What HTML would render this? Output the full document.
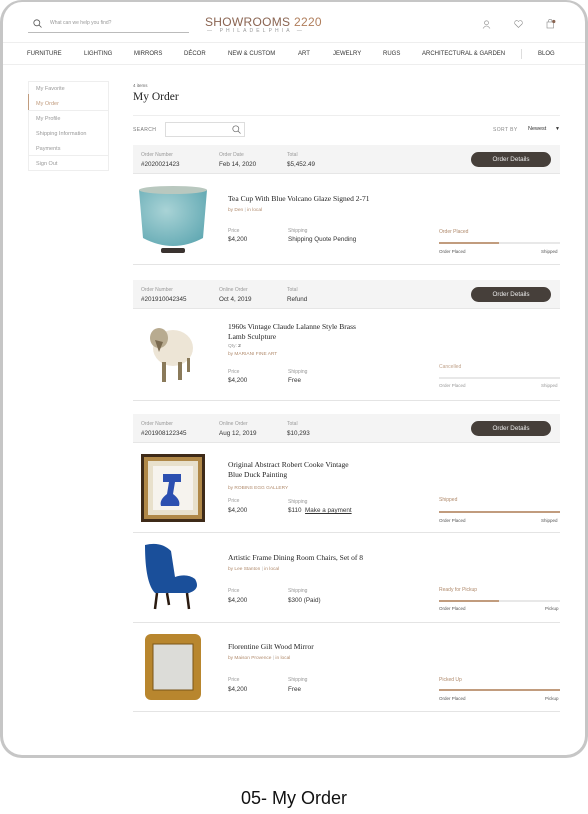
<!DOCTYPE html>
<html><head><meta charset="utf-8"><style>
*{margin:0;padding:0;box-sizing:border-box}
body{width:588px;height:814px;background:#fff;position:relative;overflow:hidden;font-family:"Liberation Sans",sans-serif;color:#333}
.frame{position:absolute;left:0;top:0;width:588px;height:758px;border-radius:22px;background:#fff;overflow:hidden}
.border{position:absolute;left:0;top:0;width:588px;height:758px;border:3px solid #c6c6c6;border-top-width:2px;border-radius:22px}
.a{position:absolute;white-space:nowrap}
.nav{font-size:6px;color:#333;top:51px}
.sb{left:36px;font-size:5.5px;color:#999}
.lbl{font-size:5px;color:#999}
.val{font-size:6.3px;color:#333}
.serif{font-family:"Liberation Serif",serif;color:#222}
.tan{color:#b08a6c}
.band{position:absolute;left:133px;width:427px;height:29px;background:#f4f4f4;border-bottom:1px solid #e6e6e6}
.btn{position:absolute;left:471px;width:80px;height:15px;border-radius:8px;background:#463f3a;color:#eee;font-size:6.3px;text-align:center;line-height:15px}
.sep{position:absolute;left:133px;width:427px;height:1px;background:#e4e4e4}
.bar{position:absolute;left:439px;width:121px;height:2px;background:#e8e8e8}
.bar i{display:block;height:2px;background:#c19c7e}
.sm{font-size:4.5px;color:#555}
</style></head><body>
<div class="frame">
<svg class="a" style="left:33px;top:19px" width="9" height="9" viewBox="0 0 9 9"><circle cx="3.8" cy="3.8" r="3" fill="none" stroke="#555" stroke-width=".8"/><line x1="6" y1="6" x2="8.5" y2="8.5" stroke="#555" stroke-width=".8"/></svg>
<div class="a" style="left:50px;top:20px;font-size:5px;color:#999">What can we help you find?</div>
<div class="a" style="left:28px;top:32px;width:161px;height:1px;background:#bbb"></div>
<div class="a" style="left:205px;top:15px;font-size:12px;color:#8a6451;letter-spacing:.3px">SHOWROOMS <span style="color:#b07e5c">2220</span></div>
<div class="a" style="left:207px;top:28px;font-size:5px;color:#999;letter-spacing:3.1px">— PHILADELPHIA —</div>
<svg class="a" style="left:482px;top:20px" width="9" height="9" viewBox="0 0 9 9"><circle cx="4.5" cy="2.8" r="2" fill="none" stroke="#888" stroke-width=".6"/><path d="M1 8.5 Q4.5 3.5 8 8.5" fill="none" stroke="#888" stroke-width=".6"/></svg>
<svg class="a" style="left:514px;top:20px" width="9" height="8" viewBox="0 0 9 8"><path d="M4.5 7.5 L1 4 A2 2 0 0 1 4.5 1.5 A2 2 0 0 1 8 4 Z" fill="none" stroke="#888" stroke-width=".6"/></svg>
<svg class="a" style="left:546px;top:19px" width="10" height="10" viewBox="0 0 10 10"><rect x="1" y="3" width="6.5" height="6" fill="none" stroke="#888" stroke-width=".6"/><path d="M2.5 3 V2 a1.7 1.7 0 0 1 3.4 0 V3" fill="none" stroke="#888" stroke-width=".6"/><circle cx="7.8" cy="2.5" r="1.6" fill="#8a6451"/></svg>
<div class="a" style="left:0;top:42px;width:588px;height:1px;background:#eee"></div>
<div class="a nav" style="left:27px">FURNITURE</div>
<div class="a nav" style="left:84px">LIGHTING</div>
<div class="a nav" style="left:134px">MIRRORS</div>
<div class="a nav" style="left:184px">DÉCOR</div>
<div class="a nav" style="left:228px">NEW &amp; CUSTOM</div>
<div class="a nav" style="left:298px">ART</div>
<div class="a nav" style="left:333px">JEWELRY</div>
<div class="a nav" style="left:383px">RUGS</div>
<div class="a nav" style="left:422px">ARCHITECTURAL &amp; GARDEN</div>
<div class="a" style="left:521px;top:49px;width:1px;height:10px;background:#ddd"></div>
<div class="a nav" style="left:538px">BLOG</div>
<div class="a" style="left:0;top:64px;width:588px;height:1px;background:#eee"></div>
<div class="a" style="left:28px;top:81px;width:81px;height:90px;border:1px solid #eee"></div>
<div class="a" style="left:28px;top:94px;width:1px;height:16px;background:#c19c7e"></div>
<div class="a" style="left:28px;top:110px;width:81px;height:1px;background:#eee"></div>
<div class="a" style="left:28px;top:155px;width:81px;height:1px;background:#eee"></div>
<div class="a sb" style="top:86px">My Favorite</div>
<div class="a sb" style="top:101px;color:#c19c7e">My Order</div>
<div class="a sb" style="top:116px">My Profile</div>
<div class="a sb" style="top:131px">Shipping Information</div>
<div class="a sb" style="top:146px">Payments</div>
<div class="a sb" style="top:161px">Sign Out</div>
<div class="a" style="left:133px;top:83px;font-size:4.5px;color:#666">4 items</div>
<div class="a serif" style="left:133px;top:91px;font-size:11.5px">My Order</div>
<div class="a" style="left:133px;top:115px;width:427px;height:1px;background:#eee"></div>
<div class="a" style="left:133px;top:127px;font-size:5px;color:#777;letter-spacing:.4px">SEARCH</div>
<div class="a" style="left:165px;top:122px;width:80px;height:15px;border:1px solid #ddd"></div>
<svg class="a" style="left:232px;top:125px" width="9" height="9" viewBox="0 0 9 9"><circle cx="3.8" cy="3.8" r="3" fill="none" stroke="#666" stroke-width=".7"/><line x1="6" y1="6" x2="8.5" y2="8.5" stroke="#666" stroke-width=".7"/></svg>
<div class="a" style="left:493px;top:127px;font-size:5px;color:#888;letter-spacing:.4px">SORT BY</div>
<div class="a" style="left:528px;top:126px;font-size:5.5px;color:#333">Newest</div>
<div class="a" style="left:555px;top:126px;font-size:5px">▼</div>

<div class="band" style="top:145px"></div>
<div class="a lbl" style="left:141px;top:152px">Order Number</div><div class="a val" style="left:141px;top:161px">#2020021423</div>
<div class="a lbl" style="left:219px;top:152px">Order Date</div><div class="a val" style="left:219px;top:161px">Feb 14, 2020</div>
<div class="a lbl" style="left:287px;top:152px">Total</div><div class="a val" style="left:287px;top:161px">$5,452.49</div>
<div class="btn" style="top:152px">Order Details</div>
<svg class="a" style="left:137px;top:184px" width="72" height="72" viewBox="0 0 72 72"><defs><radialGradient id="g1" cx=".4" cy=".4" r=".7"><stop offset="0" stop-color="#a9d3d6"/><stop offset="1" stop-color="#62a9b3"/></radialGradient></defs><path d="M2 6 Q36 0 70 6 L66 54 Q36 70 6 54 Z" fill="url(#g1)"/><ellipse cx="36" cy="6" rx="34" ry="4" fill="#b9c8bf"/><rect x="24" y="64" width="24" height="5" rx="2" fill="#3a3330"/></svg>
<div class="a serif" style="left:228px;top:194px;font-size:7.5px">Tea Cup With Blue Volcano Glaze Signed 2-71</div>
<div class="a tan" style="left:228px;top:208px;font-size:4.8px">by Den <span style="color:#bbb">|</span> in local</div>
<div class="a lbl" style="left:228px;top:228px">Price</div><div class="a val" style="left:228px;top:236px">$4,200</div>
<div class="a lbl" style="left:288px;top:228px">Shipping</div><div class="a val" style="left:288px;top:236px">Shipping Quote Pending</div>
<div class="a tan" style="left:439px;top:229px;font-size:5px">Order Placed</div>
<div class="bar" style="top:242px"><i style="width:60px"></i></div>
<div class="a sm" style="left:439px;top:249px">Order Placed</div><div class="a sm" style="left:541px;top:249px">Shipped</div>
<div class="sep" style="top:264px"></div>

<div class="band" style="top:280px"></div>
<div class="a lbl" style="left:141px;top:287px">Order Number</div><div class="a val" style="left:141px;top:296px">#201910042345</div>
<div class="a lbl" style="left:219px;top:287px">Online Order</div><div class="a val" style="left:219px;top:296px">Oct 4, 2019</div>
<div class="a lbl" style="left:287px;top:287px">Total</div><div class="a val" style="left:287px;top:296px">Refund</div>
<div class="btn" style="top:287px">Order Details</div>
<svg class="a" style="left:145px;top:318px" width="50" height="72" viewBox="0 0 50 72"><ellipse cx="28" cy="30" rx="20" ry="18" fill="#ede5d6"/><ellipse cx="14" cy="20" rx="9" ry="10" fill="#b8ab90"/><path d="M10 22 L14 34 L18 24" fill="#7a6a50"/><rect x="17" y="44" width="4" height="20" fill="#8a7a5a"/><rect x="33" y="44" width="4" height="18" fill="#8a7a5a"/><rect x="42" y="40" width="3" height="14" fill="#8a7a5a"/></svg>
<div class="a serif" style="left:228px;top:322px;font-size:7.5px;line-height:10px">1960s Vintage Claude Lalanne Style Brass<br>Lamb Sculpture</div>
<div class="a" style="left:228px;top:344px;font-size:4.8px;color:#999">Qty: <span style="color:#333">2</span></div>
<div class="a tan" style="left:228px;top:352px;font-size:4.8px">by MARIANI FINE ART</div>
<div class="a lbl" style="left:228px;top:369px">Price</div><div class="a val" style="left:228px;top:377px">$4,200</div>
<div class="a lbl" style="left:288px;top:369px">Shipping</div><div class="a val" style="left:288px;top:377px">Free</div>
<div class="a tan" style="left:439px;top:364px;font-size:5px;opacity:.8">Cancelled</div>
<div class="bar" style="top:377px"></div>
<div class="a sm" style="left:439px;top:383px;color:#999">Order Placed</div><div class="a sm" style="left:541px;top:383px;color:#999">Shipped</div>
<div class="sep" style="top:400px"></div>

<div class="band" style="top:414px"></div>
<div class="a lbl" style="left:141px;top:421px">Order Number</div><div class="a val" style="left:141px;top:430px">#201908122345</div>
<div class="a lbl" style="left:219px;top:421px">Online Order</div><div class="a val" style="left:219px;top:430px">Aug 12, 2019</div>
<div class="a lbl" style="left:287px;top:421px">Total</div><div class="a val" style="left:287px;top:430px">$10,293</div>
<div class="btn" style="top:421px">Order Details</div>
<svg class="a" style="left:141px;top:454px" width="64" height="68" viewBox="0 0 64 68"><rect width="64" height="68" fill="#3e2a18"/><rect x="3" y="3" width="58" height="62" fill="#b08848"/><rect x="7" y="7" width="50" height="54" fill="#e8e0cc"/><rect x="12" y="12" width="40" height="44" fill="#f6f3ee"/><path d="M22 20 H40 V28 H34 L32 40 Q40 46 38 52 H20 Q18 46 26 40 L28 28 H22 Z" fill="#2c4fb0"/></svg>
<div class="a serif" style="left:228px;top:460px;font-size:7.5px;line-height:10px">Original Abstract Robert Cooke Vintage<br>Blue Duck Painting</div>
<div class="a tan" style="left:228px;top:486px;font-size:4.8px">by ROBINS EGG GALLERY</div>
<div class="a lbl" style="left:228px;top:498px">Price</div><div class="a val" style="left:228px;top:507px">$4,200</div>
<div class="a lbl" style="left:288px;top:499px">Shipping</div><div class="a val" style="left:288px;top:507px">$110 &nbsp;<span style="text-decoration:underline">Make a payment</span></div>
<div class="a tan" style="left:439px;top:497px;font-size:5px">Shipped</div>
<div class="bar" style="top:511px"><i style="width:121px"></i></div>
<div class="a sm" style="left:439px;top:518px">Order Placed</div><div class="a sm" style="left:541px;top:518px">Shipped</div>
<div class="sep" style="top:532px"></div>

<svg class="a" style="left:141px;top:543px" width="66" height="70" viewBox="0 0 66 70"><path d="M4 2 Q20 -2 30 8 L34 34 Q46 30 54 36 Q60 46 48 50 L14 50 Q4 40 4 2 Z" fill="#1a4f9a"/><path d="M16 50 L14 66 M26 50 L28 62 M46 50 L48 66" stroke="#2a1a10" stroke-width="2.5"/></svg>
<div class="a serif" style="left:228px;top:553px;font-size:7.5px">Artistic Frame Dining Room Chairs, Set of 8</div>
<div class="a tan" style="left:228px;top:567px;font-size:4.8px">by Lee Stanton <span style="color:#bbb">|</span> in local</div>
<div class="a lbl" style="left:228px;top:588px">Price</div><div class="a val" style="left:228px;top:597px">$4,200</div>
<div class="a lbl" style="left:288px;top:588px">Shipping</div><div class="a val" style="left:288px;top:597px">$300 (Paid)</div>
<div class="a tan" style="left:439px;top:587px;font-size:5px">Ready for Pickup</div>
<div class="bar" style="top:600px"><i style="width:60px"></i></div>
<div class="a sm" style="left:439px;top:606px">Order Placed</div><div class="a sm" style="left:545px;top:606px">Pickup</div>
<div class="sep" style="top:622px"></div>

<svg class="a" style="left:143px;top:632px" width="60" height="70" viewBox="0 0 60 70"><rect x="2" y="2" width="56" height="66" rx="6" fill="#b8862e"/><rect x="10" y="12" width="40" height="46" fill="#dcdcd8"/><rect x="10" y="12" width="40" height="46" fill="none" stroke="#7a5518" stroke-width="1"/></svg>
<div class="a serif" style="left:228px;top:642px;font-size:7.5px">Florentine Gilt Wood Mirror</div>
<div class="a tan" style="left:228px;top:656px;font-size:4.8px">by Maison Provence <span style="color:#bbb">|</span> in local</div>
<div class="a lbl" style="left:228px;top:677px">Price</div><div class="a val" style="left:228px;top:686px">$4,200</div>
<div class="a lbl" style="left:288px;top:677px">Shipping</div><div class="a val" style="left:288px;top:686px">Free</div>
<div class="a tan" style="left:439px;top:677px;font-size:5px">Picked Up</div>
<div class="bar" style="top:689px"><i style="width:121px"></i></div>
<div class="a sm" style="left:439px;top:696px">Order Placed</div><div class="a sm" style="left:545px;top:696px">Pickup</div>
<div class="sep" style="top:711px"></div>
</div>
<div class="border"></div>
<div class="a" style="left:0;width:588px;top:788px;text-align:center;font-size:18px;color:#111">05- My Order</div>
</body></html>
